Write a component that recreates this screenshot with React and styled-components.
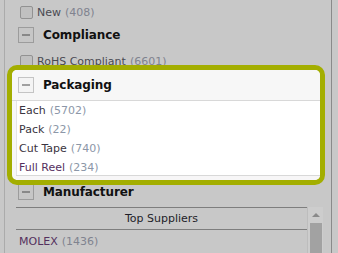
import React from 'react';
import styled, { createGlobalStyle } from "styled-components";

const GlobalStyle = createGlobalStyle`
	html, body {
		margin: 0;
		padding: 0;
		background: #c8c8c8;
		font-family: "DejaVu Sans", Verdana, sans-serif;
		font-size: 11px;
		overflow: hidden;
	}
`;

const packaging = [
	{ name: "Each", count: 5702 },
	{ name: "Pack", count: 22 },
	{ name: "Cut Tape", count: 740 },
	{ name: "Full Reel", count: 234, visited: true },
];

const Minus = ({ lit }) => (
	<MinusBox lit={lit}>
		<Dash lit={lit} />
	</MinusBox>
);

const App = () => {
	return (
		<>
			<GlobalStyle />
			<Page>
				<CheckRow>
					<Check />
					<Label>New</Label>
					<Count>(408)</Count>
				</CheckRow>
				<Header>
					<Minus />
					<Title>Compliance</Title>
				</Header>
				<CheckRow top={10}>
					<Check />
					<Label>RoHS Compliant</Label>
					<Count>(6601)</Count>
				</CheckRow>

				<Spotlight>
					<SpotHeader>
						<Minus lit />
						<Title>Packaging</Title>
					</SpotHeader>
					<SpotBody>
						{packaging.map((p) => (
							<Item key={p.name}>
								<ItemName visited={p.visited}>{p.name}</ItemName>
								<ItemCount>({p.count})</ItemCount>
							</Item>
						))}
					</SpotBody>
					<SpotFoot />
				</Spotlight>

				<Header top={-1}>
					<Minus />
					<Title>Manufacturer</Title>
				</Header>
				<Suppliers>
					<SupplierList>
						<TableHead>Top Suppliers</TableHead>
						<SupplierRow>
							<ItemName visited>MOLEX</ItemName>
							<Count>(1436)</Count>
						</SupplierRow>
					</SupplierList>
					<Scrollbar>
						<Arrow />
						<Thumb />
					</Scrollbar>
				</Suppliers>
			</Page>
		</>
	)
}

const Page = styled.div`
	margin-left: 4px;
	width: 328px;
	height: 253px;
	box-sizing: border-box;
	border-left: 1px solid #ababab;
	border-right: 1px solid #8a8a8a;
	padding-top: 4px;
	overflow: hidden;
`;

const CheckRow = styled.div`
	display: flex;
	align-items: center;
	height: 16px;
	margin-top: ${(p) => p.top || 0}px;
	padding-left: 15px;
	white-space: nowrap;
`;

const Check = styled.span`
	width: 11px;
	height: 11px;
	border: 1px solid #929292;
	border-radius: 2px;
	background: #c0c0c0;
	margin-right: 4px;
`;

const Label = styled.span`
	color: #4a4a52;
	margin-right: 4px;
`;

const Count = styled.span`
	color: #80838f;
`;

const Header = styled.div`
	display: flex;
	align-items: center;
	height: 16px;
	margin-top: ${(p) => (p.top === undefined ? 7 : p.top)}px;
	padding-left: 13px;
`;

const MinusBox = styled.span`
	width: 14px;
	height: 14px;
	border: 1px solid ${(p) => (p.lit ? "#c4c4c4" : "#9c9c9c")};
	background: ${(p) => (p.lit ? "#f4f4f4" : "#c6c6c6")};
	display: flex;
	align-items: center;
	justify-content: center;
	margin-right: 9px;
	flex-shrink: 0;
`;

const Dash = styled.span`
	width: 8px;
	height: 2px;
	background: ${(p) => (p.lit ? "#a0a0a0" : "#888")};
`;

const Title = styled.span`
	font-size: 12px;
	font-weight: bold;
	color: #111;
	letter-spacing: -0.1px;
`;

const Spotlight = styled.div`
	position: relative;
	z-index: 2;
	margin: -4px 0 0 2px;
	width: 318px;
	height: 120px;
	box-sizing: border-box;
	border: 5px solid #a3ae00;
	border-radius: 10px;
	background: #f7f7f7;
	overflow: hidden;
	display: flex;
	flex-direction: column;
`;

const SpotHeader = styled.div`
	display: flex;
	align-items: center;
	height: 30px;
	flex-shrink: 0;
	padding-left: 6px;
	border-bottom: 1px solid #d8d8d8;
	background: #f7f7f7;
`;

const SpotBody = styled.div`
	height: 74px;
	margin-left: 4px;
	flex-shrink: 0;
	background: #fff;
	border-left: 1px solid #e4e4e4;
	overflow: hidden;
`;

const SpotFoot = styled.div`
	flex: 1;
	margin-left: 4px;
	border-top: 1px solid #d8d8d8;
	background: #f7f6f7;
`;

const Item = styled.div`
	display: flex;
	align-items: center;
	height: 19px;
	padding-left: 2px;
	white-space: nowrap;
`;

const ItemName = styled.span`
	color: ${(p) => (p.visited ? "#54305e" : "#3a3440")};
	margin-right: 4px;
`;

const ItemCount = styled.span`
	color: #8c97a8;
`;

const Suppliers = styled.div`
	display: flex;
	margin: 7px 0 0 11px;
	height: 60px;
`;

const SupplierList = styled.div`
	width: 291px;
`;

const TableHead = styled.div`
	height: 21px;
	line-height: 21px;
	text-align: center;
	color: #1e1e28;
	border-top: 1px solid #7e7e7e;
	border-bottom: 1px solid #7e7e7e;
`;

const SupplierRow = styled.div`
	display: flex;
	align-items: center;
	height: 22px;
	padding-left: 3px;
	white-space: nowrap;
`;

const Scrollbar = styled.div`
	width: 15px;
	margin-left: 0;
	background: #cdcdcd;
	border-left: 1px solid #bdbdbd;
	display: flex;
	flex-direction: column;
	align-items: center;
`;

const Arrow = styled.span`
	margin-top: 6px;
	width: 0;
	height: 0;
	border-left: 4px solid transparent;
	border-right: 4px solid transparent;
	border-bottom: 4px solid #8a8a8a;
`;

const Thumb = styled.span`
	margin-top: 6px;
	width: 12px;
	flex: 1;
	background: #a2a2a2;
`;

export default App
